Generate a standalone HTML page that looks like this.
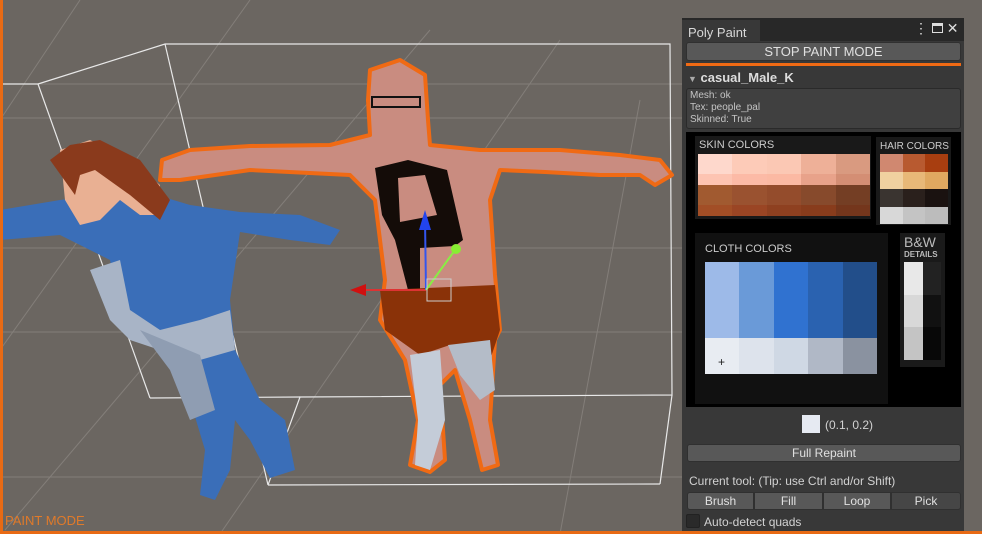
<!DOCTYPE html>
<html><head><meta charset="utf-8"><style>
*{margin:0;padding:0;box-sizing:border-box}
body{width:982px;height:534px;overflow:hidden;background:#6b6661;font-family:"Liberation Sans",sans-serif;position:relative}
.a{position:absolute}
.t{color:#d2d2d2;font-size:12px;white-space:nowrap}
.btn{position:absolute;background:#585858;border:1px solid #303030;border-radius:3px;color:#e0e0e0;font-size:12px;text-align:center}
.g{display:grid;position:absolute}
</style></head><body>
<svg class="a" style="left:0;top:0" width="982" height="534">
<g stroke="#8a8580" stroke-width="1" fill="none" opacity=".8">
<line x1="0" y1="84" x2="682" y2="84"/><line x1="0" y1="118" x2="682" y2="118"/>
<line x1="0" y1="248" x2="682" y2="248"/><line x1="0" y1="332" x2="682" y2="332"/>
<line x1="0" y1="477" x2="682" y2="477"/>
<line x1="80" y1="0" x2="0" y2="120"/><line x1="250" y1="0" x2="0" y2="350"/>
<line x1="430" y1="30" x2="5" y2="530"/><line x1="560" y1="40" x2="220" y2="534"/>
<line x1="640" y1="100" x2="560" y2="534"/>
</g>
<g stroke="#e8e8e8" stroke-width="1.2" fill="none">
<polyline points="38,84 165,44 670,44 672,395 300,397 268,485"/>
<line x1="38" y1="84" x2="150" y2="398"/><line x1="150" y1="398" x2="300" y2="397"/>
<line x1="165" y1="44" x2="268" y2="485"/><line x1="268" y1="485" x2="660" y2="484"/>
<line x1="38" y1="84" x2="0" y2="84"/><line x1="660" y1="484" x2="672" y2="395"/>
</g>
<!-- girl -->
<polygon points="0,210 60,200 140,190 190,205 240,212 300,215 340,230 330,245 290,240 240,232 230,300 235,350 260,400 285,420 295,470 270,478 250,440 235,420 230,470 215,500 200,495 205,450 190,400 170,350 140,330 120,310 110,260 60,235 0,240" fill="#3a6eb8"/>
<polygon points="90,270 120,260 130,310 160,330 200,320 230,310 235,350 200,360 160,350 130,340 110,320" fill="#a8b4c6"/>
<polygon points="140,330 200,355 215,410 190,420 170,370" fill="#8f9db2"/>
<polygon points="60,150 90,140 130,160 160,185 160,215 140,215 120,200 100,220 80,225 65,200" fill="#e9b093"/>
<polygon points="50,160 70,145 100,140 140,160 170,200 160,220 130,195 95,170 80,175 75,195" fill="#8a3a1c"/>
<!-- man -->
<polygon points="370,70 400,60 425,75 428,120 430,145 480,150 560,150 620,155 660,160 672,175 655,185 640,175 600,175 545,172 500,170 490,200 495,275 500,330 495,340 490,420 498,465 482,470 470,420 455,370 440,385 445,460 430,472 410,465 418,420 405,360 380,320 385,280 375,200 350,175 250,170 180,180 160,180 162,160 190,150 250,146 330,145 370,135 368,100" fill="#c98c80" stroke="#f06a14" stroke-width="4" stroke-linejoin="round"/>
<polygon points="375,168 408,160 447,170 463,240 455,246 420,248 420,290 408,290 395,240 382,215" fill="#140c08"/>
<polygon points="398,178 425,175 437,215 400,222" fill="#c98c80"/>
<polygon points="380,290 495,285 500,330 490,360 450,345 420,355 385,330" fill="#8a3208"/>
<polygon points="410,355 440,350 445,420 430,470 415,465 418,420" fill="#c4ccd8"/>
<polygon points="448,345 490,340 495,390 480,400 460,375" fill="#b4bcc8"/>
<rect x="372" y="97" width="48" height="10" fill="none" stroke="#111" stroke-width="2"/>
<line x1="426" y1="290" x2="358" y2="290" stroke="#d33" stroke-width="2"/>
<polygon points="350,290 366,284 366,296" fill="#d01010"/>
<line x1="426" y1="290" x2="425" y2="220" stroke="#3355ee" stroke-width="2"/>
<polygon points="425,210 419,230 431,230" fill="#2244ee"/>
<line x1="426" y1="290" x2="455" y2="250" stroke="#88ee44" stroke-width="2"/>
<circle cx="456" cy="249" r="5" fill="#88ee33"/>
<rect x="427" y="279" width="24" height="22" fill="none" stroke="#ccc" stroke-width="1"/>
<rect x="0" y="0" width="3" height="534" fill="#e86a14"/>
<rect x="0" y="531" width="982" height="3" fill="#e86a14"/>
</svg>
<div class="a" style="left:5px;top:513px;color:#e07a2a;font-size:13px">PAINT MODE</div>

<div class="a" style="left:682px;top:18px;width:282px;height:513px;background:#383838"></div>
<div class="a" style="left:682px;top:18px;width:282px;height:23px;background:#282828"></div>
<div class="a t" style="left:682px;top:20px;width:78px;height:21px;background:#383838;padding:5px 6px;font-size:13px;color:#d8d8d8">Poly Paint</div>
<div class="a t" style="left:914px;top:20px;font-size:14px;color:#ddd">⋮ <span style="display:inline-block;width:11px;height:10px;border:1.5px solid #ddd;border-top-width:3px"></span> ✕</div>
<div class="btn" style="left:686px;top:42px;width:275px;height:19px;line-height:17px;font-size:13px">STOP PAINT MODE</div>
<div class="a" style="left:686px;top:63px;width:275px;height:3px;background:#f06a14"></div>
<div class="a t" style="left:688px;top:70px;font-size:13px;font-weight:bold;color:#ddd"><span style="font-size:9px;color:#aaa">▼</span> casual_Male_K</div>
<div class="a" style="left:686px;top:88px;width:275px;height:41px;background:#404040;border:1px solid #2a2a2a;border-radius:3px"></div>
<div class="a t" style="left:690px;top:90px;font-size:10px;line-height:12px;color:#c4c4c4">Mesh: ok<br>Tex: people_pal<br>Skinned: True</div>
<div class="a" style="left:686px;top:132px;width:275px;height:275px;background:#000"></div>
<div class="a" style="left:695px;top:136px;width:176px;height:83px;background:#191919"></div>
<div class="a t" style="left:699px;top:139px;font-size:11px;color:#ccc">SKIN COLORS</div>
<div class="g" style="left:698px;top:154px;width:172px;height:62px;grid-template-columns:repeat(5,1fr);grid-template-rows:20px 11px 20px 11px">
<div style="background:#fed8cc"></div><div style="background:#fdcbb8"></div><div style="background:#fbc8b4"></div><div style="background:#eeb098"></div><div style="background:#d99a80"></div>
<div style="background:#fdc4b2"></div><div style="background:#fcbaa6"></div><div style="background:#fbb9a3"></div><div style="background:#e8a28a"></div><div style="background:#d48e74"></div>
<div style="background:#a15a30"></div><div style="background:#9a5230"></div><div style="background:#944c2c"></div><div style="background:#874a2c"></div><div style="background:#743e24"></div>
<div style="background:#a24e26"></div><div style="background:#9a4524"></div><div style="background:#8e4020"></div><div style="background:#883c1c"></div><div style="background:#74361c"></div>
</div>
<div class="a" style="left:876px;top:137px;width:75px;height:88px;background:#191919"></div>
<div class="a t" style="left:880px;top:141px;font-size:10px;color:#ccc">HAIR COLORS</div>
<div class="g" style="left:880px;top:154px;width:68px;height:70px;grid-template-columns:repeat(3,1fr);grid-template-rows:repeat(4,1fr)">
<div style="background:#d08870"></div><div style="background:#b85a30"></div><div style="background:#a83e10"></div>
<div style="background:#f0d0a0"></div><div style="background:#e8b878"></div><div style="background:#e0a860"></div>
<div style="background:#3a3430"></div><div style="background:#2a201c"></div><div style="background:#1a1210"></div>
<div style="background:#d8d8d8"></div><div style="background:#c4c4c4"></div><div style="background:#bcbcbc"></div>
</div>
<div class="a" style="left:695px;top:233px;width:193px;height:171px;background:#111"></div>
<div class="a t" style="left:705px;top:243px;font-size:11px;color:#ccc">CLOTH COLORS</div>
<div class="g" style="left:705px;top:262px;width:172px;height:112px;grid-template-columns:repeat(5,1fr);grid-template-rows:76px 36px">
<div style="background:#9dbae8"></div><div style="background:#6a9ad8"></div><div style="background:#3072d0"></div><div style="background:#2a62b0"></div><div style="background:#224e8a"></div>
<div style="background:#e8ecf2"></div><div style="background:#dde3ec"></div><div style="background:#cfd8e4"></div><div style="background:#b0b8c6"></div><div style="background:#8a92a0"></div>
</div>
<div class="a" style="left:718px;top:355px;color:#222;font-size:12px">+</div>
<div class="a" style="left:900px;top:233px;width:45px;height:134px;background:#1a1a1a"></div>
<div class="a t" style="left:904px;top:235px;font-size:14px;color:#bbb;line-height:14px">B&amp;W</div>
<div class="a t" style="left:904px;top:250px;font-size:8px;color:#bbb;font-weight:bold">DETAILS</div>
<div class="g" style="left:904px;top:262px;width:37px;height:98px;grid-template-columns:19px 18px;grid-template-rows:repeat(3,1fr)">
<div style="background:#e8e8e8"></div><div style="background:#222"></div><div style="background:#d8d8d8"></div><div style="background:#111"></div><div style="background:#c4c4c4"></div><div style="background:#080808"></div>
</div>
<div class="a" style="left:802px;top:415px;width:18px;height:18px;background:#e6eaf2"></div>
<div class="a t" style="left:825px;top:418px;font-size:12px">(0.1, 0.2)</div>
<div class="btn" style="left:687px;top:444px;width:274px;height:18px;line-height:16px">Full Repaint</div>
<div class="a t" style="left:689px;top:474px;font-size:12px">Current tool: (Tip: use Ctrl and/or Shift)</div>
<div class="btn" style="left:687px;top:492px;width:67px;height:18px;line-height:16px;border-radius:3px 0 0 3px">Brush</div>
<div class="btn" style="left:754px;top:492px;width:69px;height:18px;line-height:16px;border-radius:0">Fill</div>
<div class="btn" style="left:823px;top:492px;width:68px;height:18px;line-height:16px;border-radius:0">Loop</div>
<div class="btn" style="left:891px;top:492px;width:70px;height:18px;line-height:16px;border-radius:0 3px 3px 0;background:#464646">Pick</div>
<div class="a" style="left:686px;top:514px;width:14px;height:14px;background:#2a2a2a;border:1px solid #222;border-radius:2px"></div>
<div class="a t" style="left:704px;top:515px;font-size:12px">Auto-detect quads</div>
</body></html>
